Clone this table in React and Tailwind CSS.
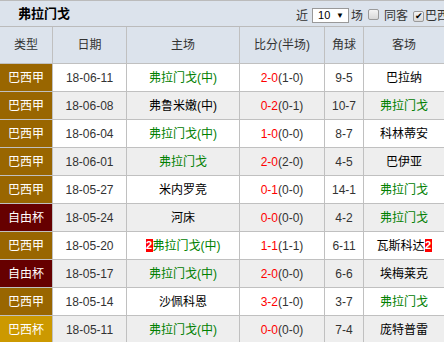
import React from "react";

const G = "text-[#008000]";
const rows = [
  { t: "巴西甲", c: "bg-[#996600]", d: "18-06-11", h: "弗拉门戈(中)", hg: true, s: "2-0", hs: "(1-0)", k: "9-5", a: "巴拉纳", ag: false },
  { t: "巴西甲", c: "bg-[#996600]", d: "18-06-08", h: "弗鲁米嫩(中)", hg: false, s: "0-2", hs: "(0-1)", k: "10-7", a: "弗拉门戈", ag: true },
  { t: "巴西甲", c: "bg-[#996600]", d: "18-06-04", h: "弗拉门戈(中)", hg: true, s: "1-0", hs: "(0-0)", k: "8-7", a: "科林蒂安", ag: false },
  { t: "巴西甲", c: "bg-[#996600]", d: "18-06-01", h: "弗拉门戈", hg: true, s: "2-0", hs: "(2-0)", k: "4-5", a: "巴伊亚", ag: false },
  { t: "巴西甲", c: "bg-[#996600]", d: "18-05-27", h: "米内罗竞", hg: false, s: "0-1", hs: "(0-0)", k: "14-1", a: "弗拉门戈", ag: true },
  { t: "自由杯", c: "bg-[#660000]", d: "18-05-24", h: "河床", hg: false, s: "0-0", hs: "(0-0)", k: "4-2", a: "弗拉门戈", ag: true },
  { t: "巴西甲", c: "bg-[#996600]", d: "18-05-20", h: "弗拉门戈(中)", hg: true, hr: "2", s: "1-1", hs: "(1-1)", k: "6-11", a: "瓦斯科达", ag: false, ar: "2" },
  { t: "自由杯", c: "bg-[#660000]", d: "18-05-17", h: "弗拉门戈(中)", hg: true, s: "2-0", hs: "(0-0)", k: "6-6", a: "埃梅莱克", ag: false },
  { t: "巴西甲", c: "bg-[#996600]", d: "18-05-14", h: "沙佩科恩", hg: false, s: "3-2", hs: "(1-0)", k: "3-7", a: "弗拉门戈", ag: true },
  { t: "巴西杯", c: "bg-[#cc9900]", d: "18-05-11", h: "弗拉门戈(中)", hg: true, s: "0-0", hs: "(0-0)", k: "7-4", a: "庞特普雷", ag: false },
];

function Badge({ n }) {
  return (
    <span className="inline-flex items-center justify-center w-[7px] h-[13px] bg-[#ff0000] text-white text-[11px] font-bold leading-none">
      {n}
    </span>
  );
}

function Box({ checked }) {
  return (
    <span className="inline-flex items-center justify-center w-[11px] h-[11px] border border-[#9a9a9a] rounded-[2px] bg-gradient-to-b from-[#f4f4f4] to-[#d8d8d8] text-[9px] leading-none text-black">
      {checked ? "✔" : ""}
    </span>
  );
}

const cell = "flex items-center justify-center border-r border-[#c0c0c0]";

export default function App() {
  return (
    <div className="w-[444px] h-[342px] overflow-hidden bg-white font-['Liberation_Sans','Noto_Sans_CJK_SC',sans-serif] text-[12px] leading-none">
      <div className="h-[27px] border-t border-b border-[#bbbbbb] bg-[#dce3ec] flex items-center whitespace-nowrap overflow-hidden">
        <div className="w-[296px] shrink-0 pl-[18px] font-bold text-[13px] text-black">弗拉门戈</div>
        <div className="flex items-center shrink-0 pt-[4px] text-[#333]">
          <span>近</span>
          <span className="ml-[4px] w-[37px] h-[15px] border border-[#999] bg-white flex items-center justify-between pl-[5px] pr-[4px] text-black">
            <span className="text-[11px]">10</span>
            <span className="text-[8px]">▼</span>
          </span>
          <span className="ml-[2px]">场</span>
          <span className="ml-[5px]"><Box /></span>
          <span className="ml-[5px]">同客</span>
          <span className="ml-[5px]"><Box checked /></span>
          <span className="ml-[1px]">巴西甲</span>
        </div>
      </div>
      <div className="h-[37px] flex bg-[#dce3ec] border-b border-[#c0c0c0] text-[#333]">
        <div className={`${cell} w-[53px]`}>类型</div>
        <div className={`${cell} w-[74px]`}>日期</div>
        <div className={`${cell} w-[113px]`}>主场</div>
        <div className={`${cell} w-[85px]`}>比分(半场)</div>
        <div className={`${cell} w-[39px]`}>角球</div>
        <div className="flex items-center justify-center w-[80px]">客场</div>
      </div>
      {rows.map((r, i) => (
        <div key={i} className={`h-[28px] flex border-b border-[#c0c0c0] ${i % 2 ? "bg-[#eeeeee]" : "bg-white"}`}>
          <div className={`${cell} w-[53px] ${r.c} text-white`}>{r.t}</div>
          <div className={`${cell} w-[74px] text-[#333]`}>{r.d}</div>
          <div className={`${cell} w-[113px] ${r.hg ? G : "text-black"}`}>
            {r.hr && <Badge n={r.hr} />}
            <span>{r.h}</span>
          </div>
          <div className={`${cell} w-[85px] text-[#333]`}>
            <span className="text-[#ff0000]">{r.s}</span>
            <span>{r.hs}</span>
          </div>
          <div className={`${cell} w-[39px] text-[#333]`}>{r.k}</div>
          <div className={`flex items-center justify-center w-[80px] ${r.ag ? G : "text-black"}`}>
            <span>{r.a}</span>
            {r.ar && <Badge n={r.ar} />}
          </div>
        </div>
      ))}
    </div>
  );
}
